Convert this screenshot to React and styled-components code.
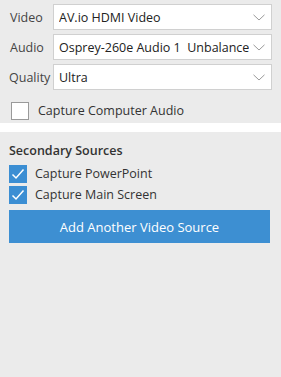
import React from "react";
import styled, { createGlobalStyle } from "styled-components";

const Global = createGlobalStyle`
  html, body { margin: 0; padding: 0; background: #ffffff; }
  body { font-family: "Open Sans", "Noto Sans", sans-serif; }
  #root { width: 281px; height: 377px; }
`;

const Page = styled.div`
  width: 281px;
  height: 377px;
  display: flex;
  flex-direction: column;
  background: #ffffff;
`;

const TopPanel = styled.div`
  background: #ebebeb;
  height: 123px;
  box-sizing: border-box;
  padding: 4px 9px 0 9px;
  display: flex;
  flex-direction: column;
`;

const Fields = styled.div`
  display: grid;
  grid-template-columns: 44px 219px;
  row-gap: 4px;
  align-items: center;
`;

const Label = styled.span`
  font-size: 12.5px;
  color: #444;
  padding-left: ${(p) => p.$indent || 0}px;
  white-space: nowrap;
`;

const Select = styled.div`
  height: 26px;
  box-sizing: border-box;
  border: 1px solid #d0d0d0;
  background: #ffffff;
  display: flex;
  align-items: center;
  padding: 0 6px 0 5px;
  gap: 4px;
  overflow: hidden;
`;

const SelectText = styled.span`
  flex: 1;
  font-size: 12.5px;
  color: #222;
  white-space: pre;
  overflow: hidden;
`;

const Chevron = () => (
  <svg width="12" height="7" viewBox="0 0 12 7" style={{ flexShrink: 0 }}>
    <path d="M0.5 0.8 L6 6 L11.5 0.8" fill="none" stroke="#9a9a9a" strokeWidth="1" />
  </svg>
);

const CheckRow = styled.label`
  display: flex;
  align-items: center;
  gap: ${(p) => p.$gap}px;
  margin-left: ${(p) => p.$ml}px;
  margin-top: ${(p) => p.$mt || 0}px;
  height: ${(p) => p.$h}px;
`;

const Box = styled.span`
  width: 18px;
  height: 18px;
  box-sizing: border-box;
  flex-shrink: 0;
  display: flex;
  align-items: center;
  justify-content: center;
  background: ${(p) => (p.$checked ? "#3b8ed3" : "#ffffff")};
  border: 1px solid ${(p) => (p.$checked ? "#3b8ed3" : "#9a9a9a")};
`;

const CheckText = styled.span`
  font-size: 12.5px;
  color: #333;
  white-space: nowrap;
`;

const Divider = styled.div`
  height: 9px;
  background: #ffffff;
`;

const LowerPanel = styled.div`
  flex: 1;
  background: #ebebeb;
  padding: 9px 11px 0 9px;
  display: flex;
  flex-direction: column;
`;

const Title = styled.div`
  font-size: 12.5px;
  font-weight: 600;
  color: #333;
  height: 22px;
  line-height: 20px;
`;

const Button = styled.button`
  margin-top: 5px;
  height: 33px;
  border: none;
  background: #3d8fd2;
  color: #ffffff;
  font-family: inherit;
  font-size: 13px;
  width: 261px;
  padding: 0;
`;

const Tick = () => (
  <svg width="14" height="12" viewBox="0 0 14 12">
    <path d="M1.5 6.5 L5 10 L12.5 1.5" fill="none" stroke="#ffffff" strokeWidth="1.5" />
  </svg>
);

export default function App() {
  return (
    <Page>
      <Global />
      <TopPanel>
        <Fields>
          <Label $indent={1}>Video</Label>
          <Select>
            <SelectText>AV.io HDMI Video</SelectText>
            <Chevron />
          </Select>
          <Label $indent={1}>Audio</Label>
          <Select>
            <SelectText>Osprey-260e Audio 1  Unbalanced</SelectText>
            <Chevron />
          </Select>
          <Label>Quality</Label>
          <Select>
            <SelectText>Ultra</SelectText>
            <Chevron />
          </Select>
        </Fields>
        <CheckRow $gap={9} $ml={2} $h={32} $mt={8}>
          <Box />
          <CheckText>Capture Computer Audio</CheckText>
        </CheckRow>
      </TopPanel>
      <Divider />
      <LowerPanel>
        <Title>Secondary Sources</Title>
        <CheckRow $gap={8} $ml={0} $h={21}>
          <Box $checked>
            <Tick />
          </Box>
          <CheckText>Capture PowerPoint</CheckText>
        </CheckRow>
        <CheckRow $gap={8} $ml={0} $h={21}>
          <Box $checked>
            <Tick />
          </Box>
          <CheckText>Capture Main Screen</CheckText>
        </CheckRow>
        <Button>Add Another Video Source</Button>
      </LowerPanel>
    </Page>
  );
}
